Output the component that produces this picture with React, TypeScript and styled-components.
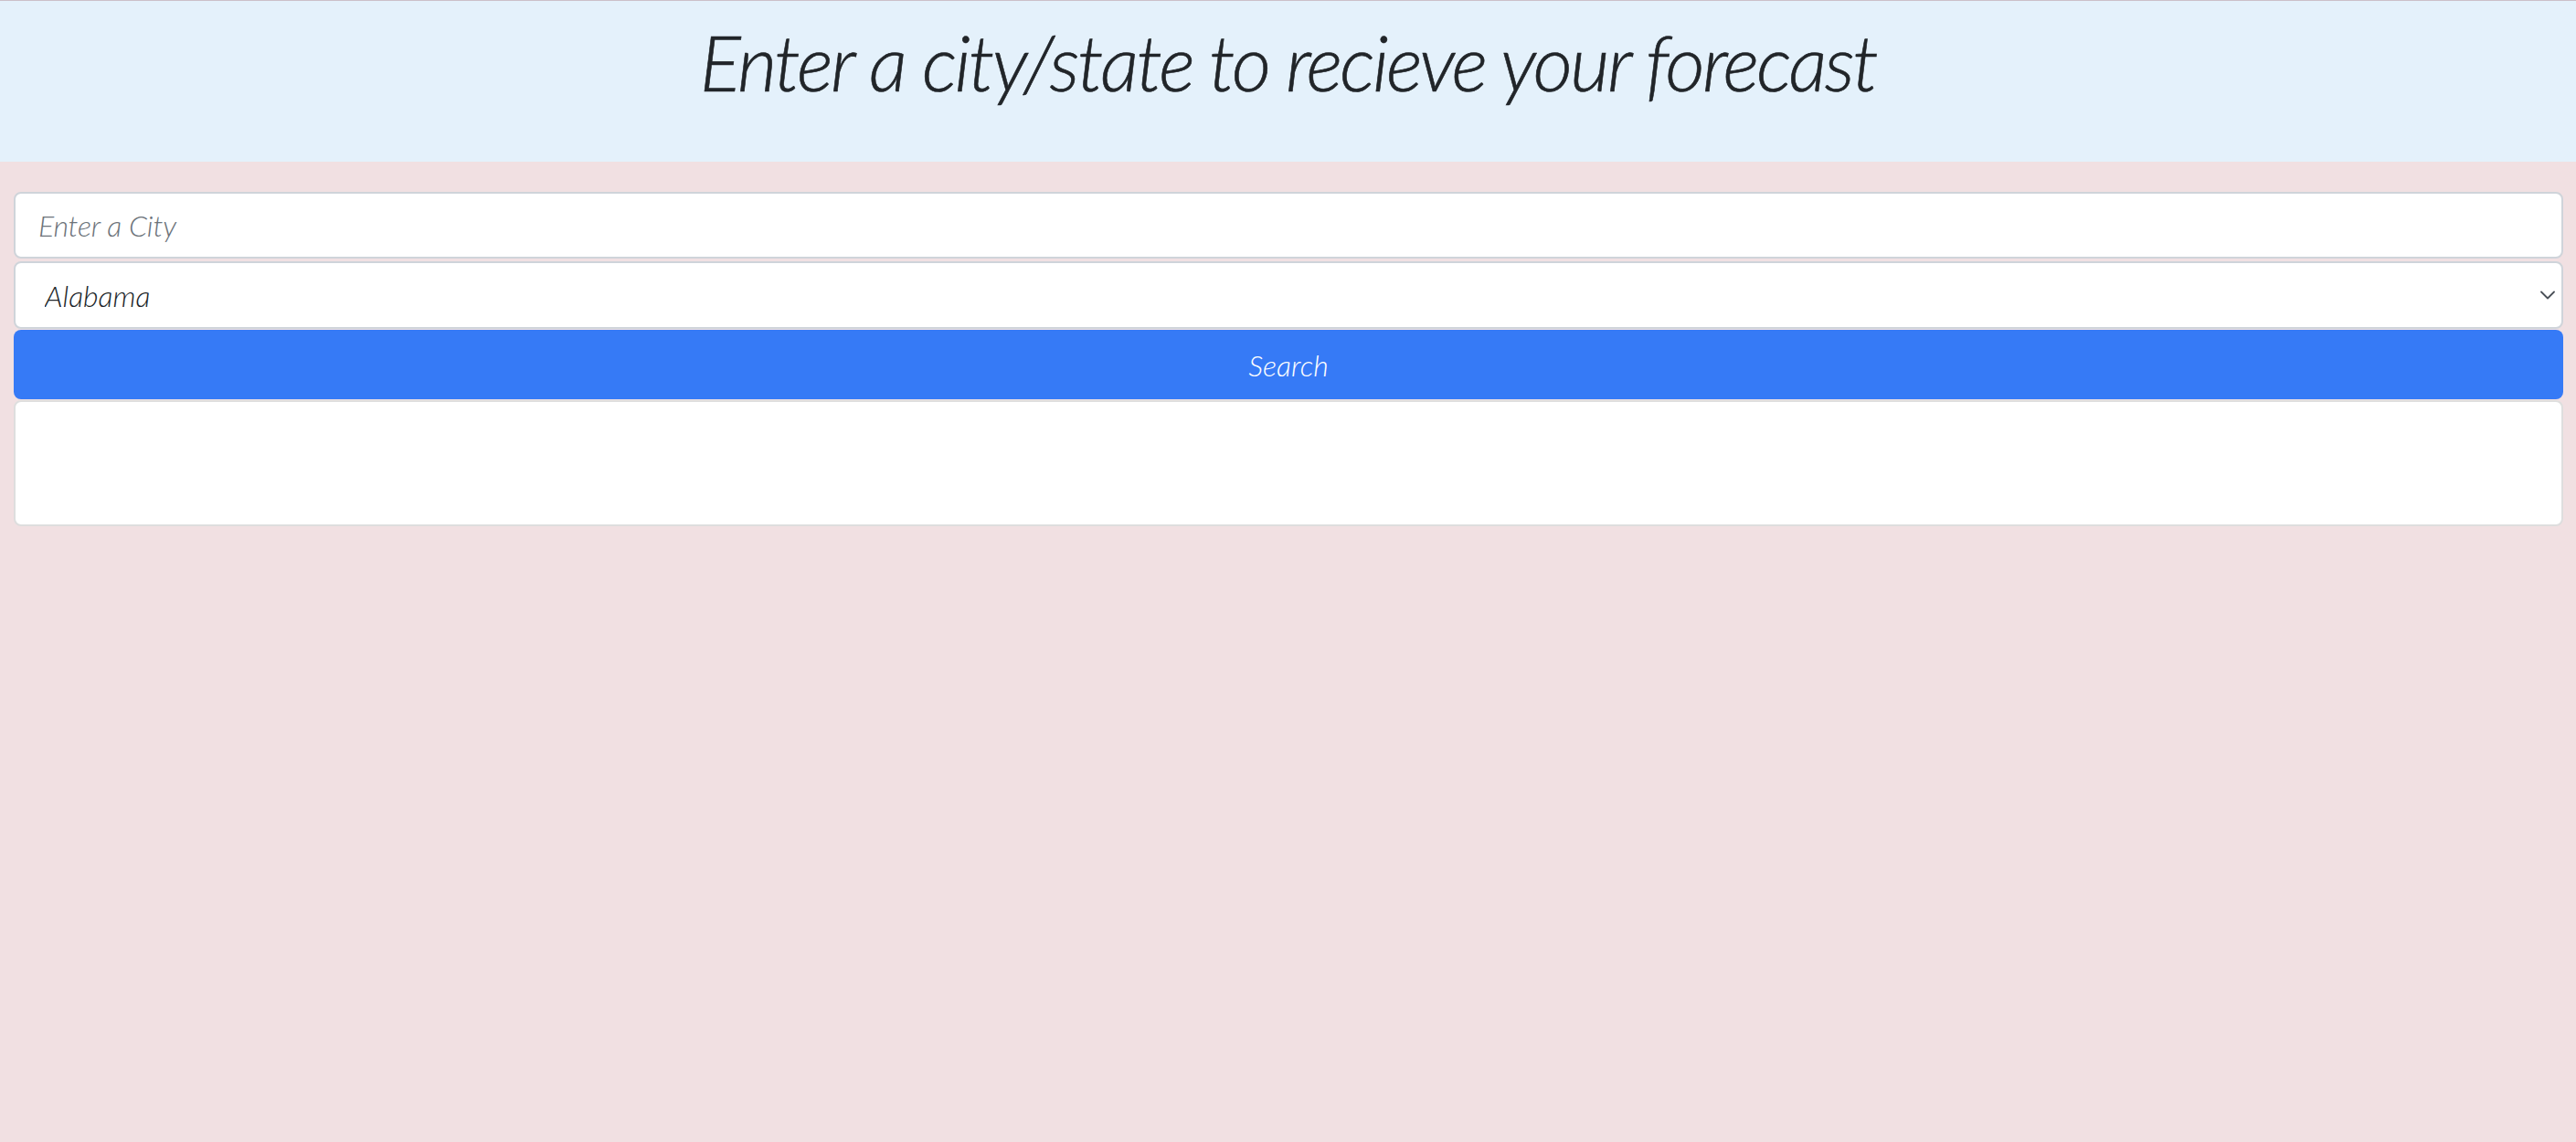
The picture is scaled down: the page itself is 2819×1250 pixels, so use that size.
import React, { useState } from "react";
import styled, { createGlobalStyle } from "styled-components";

const GlobalStyle = createGlobalStyle`
  html, body {
    margin: 0;
    padding: 0;
    background: #f1e0e2;
    min-height: 100%;
  }
  body {
    font-family: Lato, "Open Sans", Arial, sans-serif;
    color: #212529;
  }
`;

const Page = styled.div`
  min-height: 1250px;
  background: #f1e0e2;
`;

const Header = styled.header`
  height: 176px;
  background: #e4f1fb;
  border-top: 1px solid #cbbfc8;
  display: flex;
  justify-content: center;
`;

const Title = styled.h1`
  margin: 17px 0 0;
  font-family: Lato, sans-serif;
  font-style: italic;
  font-weight: 300;
  font-size: 84px;
  line-height: 1.2;
  letter-spacing: -2.6px;
  color: #212529;
  -webkit-text-stroke: 0.6px #212529;
`;

const Form = styled.form`
  display: flex;
  flex-direction: column;
  padding: 33px 14px 0 15px;
`;

const CityInput = styled.input`
  height: 73px;
  box-sizing: border-box;
  margin-bottom: 3px;
  padding: 0 25px;
  border: 2px solid #cfd4da;
  border-radius: 8px;
  background: #fff;
  font-family: Lato, sans-serif;
  font-style: italic;
  font-weight: 300;
  font-size: 32px;
  letter-spacing: -0.2px;
  color: #212529;
  outline: none;

  &::placeholder {
    color: #6c737a;
  }
`;

const SelectWrap = styled.div`
  position: relative;
  margin-bottom: 1px;
`;

const StateSelect = styled.select`
  width: 100%;
  height: 74px;
  box-sizing: border-box;
  padding: 0 60px 0 32px;
  border: 2px solid #cfd4da;
  border-radius: 8px;
  background: #fff;
  appearance: none;
  font-family: Lato, sans-serif;
  font-style: italic;
  font-weight: 300;
  font-size: 32px;
  color: #212529;
  outline: none;
`;

const Chevron = styled.svg`
  position: absolute;
  right: 9px;
  top: 32px;
  width: 16px;
  height: 10px;
  pointer-events: none;
`;

const SearchButton = styled.button`
  height: 76px;
  border: none;
  border-radius: 8px;
  background: #367af6;
  color: #fff;
  font-family: Lato, sans-serif;
  font-style: italic;
  font-weight: 300;
  font-size: 32px;
  margin-bottom: 1px;
  cursor: pointer;
`;

const Results = styled.div`
  height: 138px;
  box-sizing: border-box;
  border: 2px solid #dedede;
  border-radius: 8px;
  background: #fff;
`;

const STATES = [
  "Alabama", "Alaska", "Arizona", "Arkansas", "California", "Colorado",
  "Connecticut", "Delaware", "Florida", "Georgia", "Hawaii", "Idaho",
  "Illinois", "Indiana", "Iowa", "Kansas", "Kentucky", "Louisiana", "Maine",
  "Maryland", "Massachusetts", "Michigan", "Minnesota", "Mississippi",
  "Missouri", "Montana", "Nebraska", "Nevada", "New Hampshire", "New Jersey",
  "New Mexico", "New York", "North Carolina", "North Dakota", "Ohio",
  "Oklahoma", "Oregon", "Pennsylvania", "Rhode Island", "South Carolina",
  "South Dakota", "Tennessee", "Texas", "Utah", "Vermont", "Virginia",
  "Washington", "West Virginia", "Wisconsin", "Wyoming",
];

const App = () => {
  const [city, setCity] = useState("");
  const [state, setState] = useState("Alabama");

  return (
    <>
      <GlobalStyle />
      <Page>
        <Header>
          <Title>Enter a city/state to recieve your forecast</Title>
        </Header>
        <Form onSubmit={(e) => e.preventDefault()}>
          <CityInput
            placeholder="Enter a City"
            value={city}
            onChange={(e) => setCity(e.target.value)}
          />
          <SelectWrap>
            <StateSelect value={state} onChange={(e) => setState(e.target.value)}>
              {STATES.map((s) => (
                <option key={s} value={s}>
                  {s}
                </option>
              ))}
            </StateSelect>
            <Chevron viewBox="0 0 16 10" fill="none">
              <path d="M1 1.5l7 7 7-7" stroke="#4a5058" strokeWidth="1.8" strokeLinecap="round" strokeLinejoin="round" />
            </Chevron>
          </SelectWrap>
          <SearchButton type="submit">Search</SearchButton>
          <Results />
        </Form>
      </Page>
    </>
  );
};

export default App;
